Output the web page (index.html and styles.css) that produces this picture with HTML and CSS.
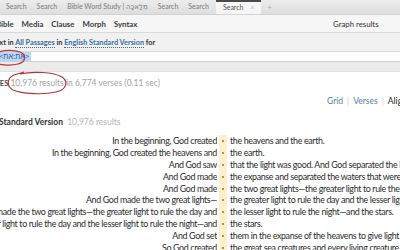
FILE: index.html
```html
<!DOCTYPE html>
<html lang="en">
<head>
    <meta charset="UTF-8">
    <meta name="viewport" content="width=device-width, initial-scale=1.0">
    <title>Search</title>
    <link rel="stylesheet" href="styles.css">
</head>
<body>
    <div class="tabs">
        <div class="tab">Search</div>
        <div class="tab">Search</div>
        <div class="tab">Bible Word Study | <bdi>מְלָאכָה</bdi></div>
        <div class="tab">Search</div>
        <div class="tab">Search</div>
        <div class="tab active">Search <span class="close">×</span></div>
        <div class="tab-add">+</div>
    </div>

    <div class="toolbar">
        <ul class="modes">
            <li>Bible</li>
            <li>Media</li>
            <li>Clause</li>
            <li>Morph</li>
            <li>Syntax</li>
        </ul>
        <div class="graph">Graph results</div>
    </div>

    <div class="query-desc">
        <span class="cut">Text in <a href="#">All Passages</a> in <a href="#">English Standard Version</a> for</span>
    </div>
    <div class="query-input">
        <span class="sel">&lt;אֵת:את&gt;</span>
    </div>
    <div class="band"></div>

    <div class="results">
        <div class="summary"><span class="cut-s"><b>MATCHES</b> 10,976 results in 6,774 verses (0.11 sec)</span></div>
        <div class="views">
            <a href="#">Grid</a><span class="sep">|</span><a href="#">Verses</a><span class="sep">|</span><span class="current">Align</span>
        </div>
        <div class="version"><span class="cut-v"><b>English Standard Version</b> <span class="count">10,976 results</span></span></div>

        <div class="kwic">
            <div class="left"><span>In the beginning, God created</span></div><div class="mark"><i></i></div><div class="right">the heavens and the earth.</div>
            <div class="left"><span>In the beginning, God created the heavens and</span></div><div class="mark"><i></i></div><div class="right">the earth.</div>
            <div class="left"><span>And God saw</span></div><div class="mark"><i></i></div><div class="right">that the light was good. And God separated the light from the darkness.</div>
            <div class="left"><span>And God made</span></div><div class="mark"><i></i></div><div class="right">the expanse and separated the waters that were under the expanse</div>
            <div class="left"><span>And God made</span></div><div class="mark"><i></i></div><div class="right">the two great lights—the greater light to rule the day</div>
            <div class="left"><span>And God made the two great lights—</span></div><div class="mark"><i></i></div><div class="right">the greater light to rule the day and the lesser light</div>
            <div class="left"><span>And God made the two great lights—the greater light to rule the day and</span></div><div class="mark"><i></i></div><div class="right">the lesser light to rule the night—and the stars.</div>
            <div class="left"><span>the greater light to rule the day and the lesser light to rule the night—and</span></div><div class="mark"><i></i></div><div class="right">the stars.</div>
            <div class="left"><span>And God set</span></div><div class="mark"><i></i></div><div class="right">them in the expanse of the heavens to give light on the earth,</div>
            <div class="left"><span>So God created</span></div><div class="mark"><i></i></div><div class="right">the great sea creatures and every living creature that moves,</div>
        </div>
    </div>

    <svg class="marks" width="400" height="250" viewBox="0 0 400 250">
        <path d="M-6 56 C-4 50 12 49 20 52 C27 55 26 62 18 64 C10 66 -2 65 -8 62" />
        <path d="M20 74 C32 71 54 72 62 77 C69 82 66 90 56 92 C44 95 22 94 13 90 C6 86 7 78 14 75 L24 72" />
    </svg>
</body>
</html>
```

FILE: styles.css
```css
* {
    margin: 0;
    padding: 0;
    box-sizing: border-box;
}
body {
    width: 400px;
    height: 250px;
    overflow: hidden;
    background: white;
    font-family: Lato, "Liberation Sans", sans-serif;
    color: #333;
    position: relative;
}
a {
    color: #3d6d99;
    text-decoration: none;
}

/* tab strip */
.tabs {
    display: flex;
    align-items: flex-end;
    height: 15px;
    background: linear-gradient(#ececec, #dedede);
    border-bottom: 1px solid #d2d2d2;
    font-size: 7px;
    color: #7a7a7a;
    padding-left: 1px;
}
.tab {
    height: 14px;
    line-height: 13px;
    padding: 0 5px;
    white-space: nowrap;
}
.tab bdi {
    font-family: "DejaVu Sans", sans-serif;
    font-size: 7px;
}
.tab.active {
    background: #f6f6f6;
    border-top: 2px solid #4a4a4a;
    line-height: 11px;
    color: #555;
    padding: 0 7px;
    margin-left: 2px;
}
.tab .close {
    color: #bbb;
    margin-left: 5px;
}
.tab-add {
    color: #aaa;
    padding: 0 6px;
    line-height: 13px;
}

/* mode toolbar */
.toolbar {
    display: flex;
    justify-content: space-between;
    align-items: center;
    height: 18px;
    background: #f6f6f6;
    border-bottom: 1px solid #d9d9d9;
    font-size: 7.8px;
}
.modes {
    display: flex;
    gap: 8px;
    list-style: none;
    margin-left: -4px;
    font-weight: bold;
    color: #3a3a3a;
}
.graph {
    width: 67px;
    white-space: nowrap;
    overflow: hidden;
    color: #333;
}

.query-desc {
    height: 19px;
    line-height: 19px;
    background: #f1f1f1;
    border-bottom: 1px solid #d9d9d9;
    font-size: 7.3px;
    font-weight: bold;
    white-space: nowrap;
    overflow: hidden;
}
.query-desc .cut {
    display: inline-block;
    margin-left: -8px;
}
.query-desc a {
    border-bottom: 1px dotted #3d6d99;
}
.query-input {
    height: 10px;
    background: white;
    border-bottom: 1px solid #cfcfcf;
    font-size: 7.5px;
    line-height: 9px;
    overflow: hidden;
}
.sel {
    display: inline-block;
    background: #bcd7f2;
    color: #2f5f9a;
    margin-left: -3px;
    padding: 0 2px;
}
.band {
    height: 10px;
    background: #ebebeb;
    border-bottom: 1px solid #e0e0e0;
}

/* results */
.results {
    padding-top: 5px;
    font-size: 8.5px;
}
.summary {
    height: 12px;
    line-height: 12px;
    white-space: nowrap;
    overflow: hidden;
    color: #a3a3a3;
}
.summary .cut-s {
    display: inline-block;
    margin-left: -27px;
}
.summary b {
    color: #444;
    font-size: 7.5px;
}
.views {
    margin-top: 6px;
    height: 12px;
    line-height: 12px;
    padding-left: 327px;
    white-space: nowrap;
    overflow: hidden;
}
.views a {
    color: #5580a8;
}
.sep {
    color: #d0d0d0;
    margin: 0 4px;
}
.current {
    color: #222;
}
.version {
    margin-top: 9px;
    height: 12px;
    line-height: 12px;
    white-space: nowrap;
    overflow: hidden;
}
.version .cut-v {
    display: inline-block;
    margin-left: -30px;
}
.version b {
    color: #333;
}
.version .count {
    color: #b5b5b5;
    margin-left: 2px;
}

.kwic {
    margin-top: 7px;
    display: grid;
    grid-template-columns: 217px 8px 1fr;
    column-gap: 2px;
    grid-auto-rows: 11.9px;
    line-height: 11.9px;
    font-size: 8.9px;
    letter-spacing: -0.35px;
    color: #2a2a2a;
}
.left {
    display: flex;
    justify-content: flex-end;
    overflow: hidden;
    white-space: nowrap;
}
.left span {
    flex-shrink: 0;
}
.mark {
    background: #fdf0cd;
    display: flex;
    align-items: center;
    justify-content: center;
}
.mark i {
    width: 2px;
    height: 2px;
    background: #c98a3a;
}
.right {
    padding-left: 1px;
    white-space: nowrap;
    overflow: hidden;
}

/* hand drawn red circles on top */
.marks {
    position: absolute;
    top: 0;
    left: 0;
    pointer-events: none;
}
.marks path {
    fill: none;
    stroke: #b8343a;
    stroke-width: 1.2;
}
```
